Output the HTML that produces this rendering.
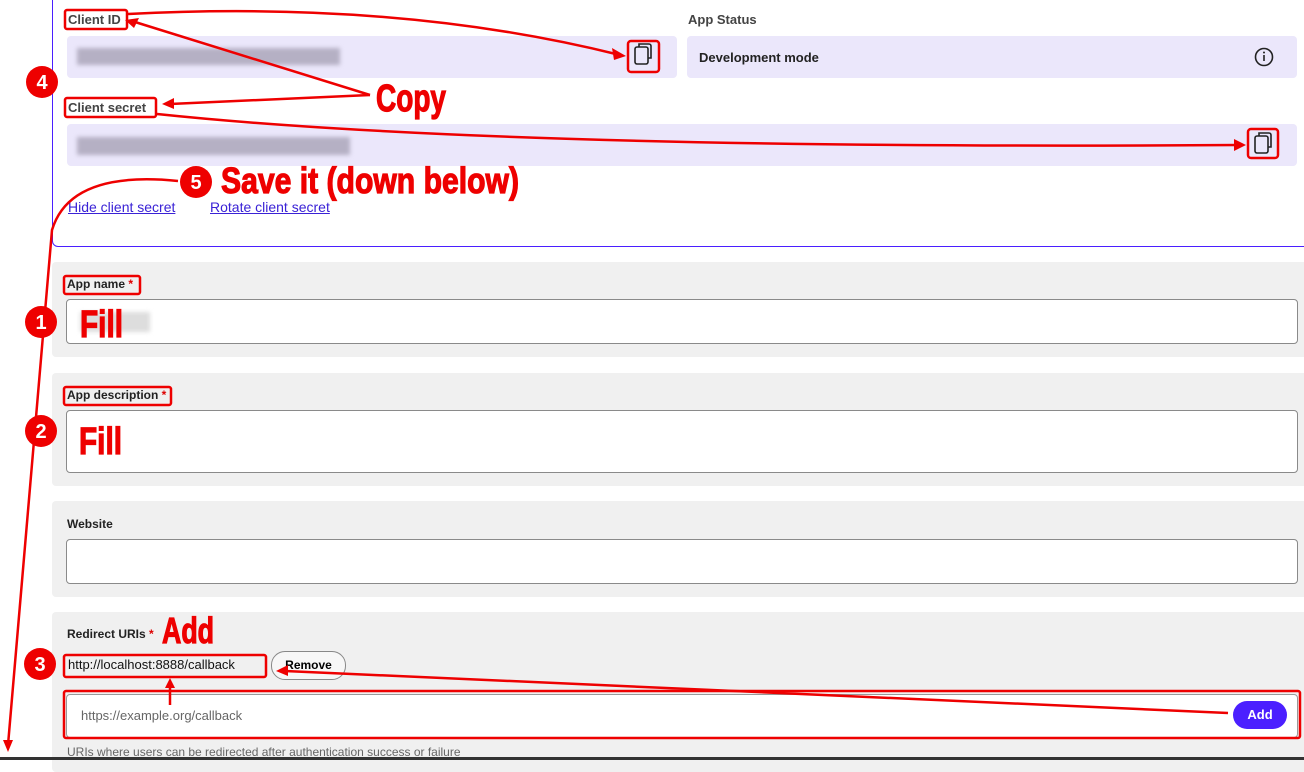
<!DOCTYPE html>
<html><head><meta charset="utf-8"><style>
body{margin:0;width:1304px;height:760px;overflow:hidden;background:#fff;font-family:"Liberation Sans",sans-serif;position:relative}
.a{position:absolute}
.lbl{font-size:13px;font-weight:bold;color:#222}
.sec{position:absolute;left:52px;width:1260px;background:#f0f0f0;border-radius:4px}
.inp{position:absolute;left:66px;width:1230px;background:#fff;border:1px solid #8a8a8a;border-radius:4px}
.blur{position:absolute;background:#b5b0c4;filter:blur(2px)}
a{color:#3a22d6;font-size:14px;text-decoration:underline}
</style></head><body>
<div class="a" style="left:52px;top:-10px;width:1270px;height:255px;border:1px solid #4a1fff;border-radius:6px"></div>
<div class="a lbl" style="left:68px;top:12px;color:#444">Client ID</div>
<div class="a lbl" style="left:688px;top:12px;color:#444">App Status</div>
<div class="a" style="left:67px;top:36px;width:610px;height:42px;background:#ebe7fb;border-radius:4px"></div>
<div class="blur" style="left:77px;top:48px;width:263px;height:17px"></div>
<div class="a" style="left:687px;top:36px;width:610px;height:42px;background:#ebe7fb;border-radius:4px"></div>
<div class="a lbl" style="left:699px;top:50px">Development mode</div>
<div class="a lbl" style="left:68px;top:100px;color:#444">Client secret</div>
<div class="a" style="left:67px;top:124px;width:1230px;height:42px;background:#ebe7fb;border-radius:4px"></div>
<div class="blur" style="left:77px;top:137px;width:273px;height:18px"></div>
<a class="a" style="left:68px;top:199px">Hide client secret</a>
<a class="a" style="left:210px;top:199px">Rotate client secret</a>

<div class="sec" style="top:262px;height:95px"></div>
<div class="a lbl" style="left:67px;top:277px;font-size:12px">App name <span style="color:#d00">*</span></div>
<div class="inp" style="top:299px;height:43px"></div>
<div class="blur" style="left:80px;top:312px;width:70px;height:20px;background:#ddd"></div>
<div class="sec" style="top:373px;height:113px"></div>
<div class="a lbl" style="left:67px;top:388px;font-size:12px">App description <span style="color:#d00">*</span></div>
<div class="inp" style="top:410px;height:61px"></div>
<div class="sec" style="top:501px;height:96px"></div>
<div class="a lbl" style="left:67px;top:517px;font-size:12px">Website</div>
<div class="inp" style="top:539px;height:43px"></div>
<div class="sec" style="top:612px;height:160px"></div>
<div class="a lbl" style="left:67px;top:627px;font-size:12px">Redirect URIs <span style="color:#d00">*</span></div>
<div class="a" style="left:68px;top:657px;font-size:13px;color:#111">http://localhost:8888/callback</div>
<div class="a" style="left:271px;top:651px;width:73px;height:27px;border:1px solid #888;border-radius:14px;background:#f7f7f7;font-size:12px;font-weight:bold;line-height:27px;text-align:center">Remove</div>
<div class="inp" style="top:694px;height:42px;border-color:#999"></div>
<div class="a" style="left:81px;top:708px;font-size:13px;color:#666">https://example.org/callback</div>
<div class="a" style="left:1233px;top:701px;width:54px;height:28px;background:#4b1fff;border-radius:14px;color:#fff;font-size:13px;font-weight:bold;line-height:28px;text-align:center">Add</div>
<div class="a" style="left:67px;top:745px;font-size:12px;color:#666">URIs where users can be redirected after authentication success or failure</div>
<div class="a" style="left:0;top:757px;width:1304px;height:3px;background:#333"></div>

<svg class="a" style="left:0;top:0" width="1304" height="760">
<g fill="none" stroke="#222" stroke-width="1.6">
<rect x="635" y="47" width="13" height="17" rx="2"/><path d="M639 47 V44 h10 a2 2 0 0 1 2 2 v12 h-3"/>
<rect x="1255" y="136" width="13" height="17" rx="2"/><path d="M1259 136 V133 h10 a2 2 0 0 1 2 2 v12 h-3"/>
<circle cx="1264" cy="57" r="8.5"/><path d="M1264 55v6"/></g>
<circle cx="1264" cy="52.5" r="1" fill="#222"/>
<g fill="none" stroke="#e00" stroke-width="2.5">
<rect x="65" y="10" width="62" height="19" rx="2"/>
<rect x="628" y="41" width="31" height="31" rx="3"/>
<rect x="65" y="98" width="91" height="19" rx="2"/>
<rect x="1248" y="129" width="30" height="29" rx="3"/>
<rect x="64" y="276" width="76" height="18" rx="2"/>
<rect x="64" y="387" width="107" height="18" rx="2"/>
<rect x="64" y="655" width="202" height="22" rx="2"/>
<rect x="64" y="691" width="1236" height="47" rx="2"/>
<path d="M128 14 Q400 0 620 55"/>
<path d="M370 95 L135 22"/>
<path d="M370 95 L170 104"/>
<path d="M157 114 Q500 150 1240 145"/>
<path d="M178 181 Q70 170 52 230 L8 745"/>
<path d="M1228 713 L285 671"/>
<path d="M170 705 L170 684"/>
</g>
<g fill="#e00">
<path d="M626 56 l-14 -8 l2 12z"/><path d="M125 20 l14 -2 l-5 10z"/><path d="M162 104 l12 -6 l0 11z"/>
<path d="M1246 145 l-12 -6 l0 12z"/><path d="M8 752 l-5 -12 l10 0z"/><path d="M276 671 l12 -6 l0 11z"/><path d="M170 678 l-5 10 l10 0z"/>
<circle cx="42" cy="82" r="16"/><circle cx="196" cy="182" r="16"/><circle cx="41" cy="322" r="16"/><circle cx="41" cy="431" r="16"/><circle cx="40" cy="664" r="16"/>
</g>
<g fill="#fff" font-family="Liberation Sans" font-weight="bold" font-size="20" text-anchor="middle">
<text x="42" y="89">4</text><text x="196" y="189">5</text><text x="41" y="329">1</text><text x="41" y="438">2</text><text x="40" y="671">3</text></g>
<g fill="#e00" stroke="#e00" stroke-width="1.2" font-family="Liberation Sans" font-weight="bold">
<text x="376" y="111" font-size="38" textLength="70" lengthAdjust="spacingAndGlyphs">Copy</text>
<text x="221" y="193" font-size="36" textLength="298" lengthAdjust="spacingAndGlyphs">Save it (down below)</text>
<text x="80" y="337" font-size="38" textLength="43" lengthAdjust="spacingAndGlyphs">Fill</text>
<text x="79" y="454" font-size="38" textLength="43" lengthAdjust="spacingAndGlyphs">Fill</text>
<text x="162" y="643" font-size="36" textLength="52" lengthAdjust="spacingAndGlyphs">Add</text>
</g>
</svg>
</body></html>
